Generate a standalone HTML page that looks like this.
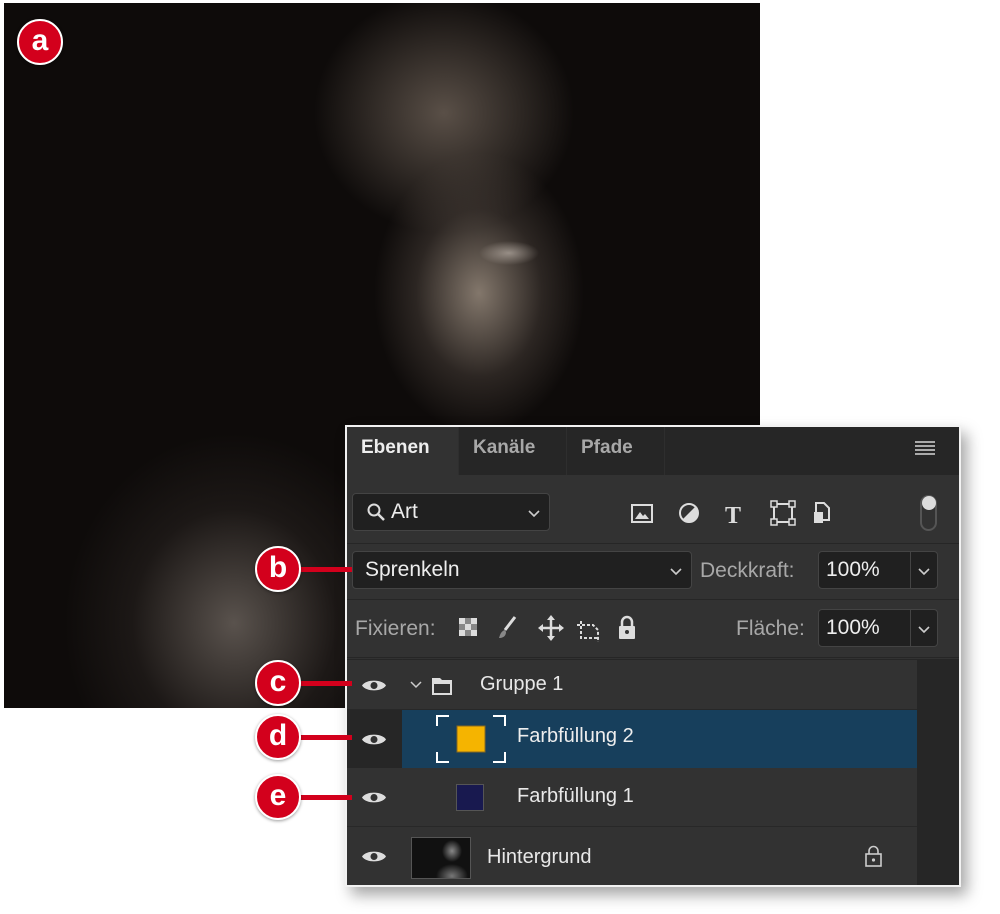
<!DOCTYPE html>
<html><head><meta charset="utf-8"><style>
*{margin:0;padding:0;box-sizing:border-box}
body{width:1000px;height:914px;background:#fff;position:relative;overflow:hidden;font-family:"Liberation Sans",sans-serif}
.photo{position:absolute;left:4px;top:3px;width:756px;height:705px;background:
radial-gradient(ellipse 45px 25px at 470px 470px,rgba(120,105,95,.45),transparent),
radial-gradient(ellipse 30px 12px at 505px 250px,rgba(230,220,210,.5),transparent),
radial-gradient(ellipse 105px 140px at 475px 290px,rgba(170,155,140,.75),rgba(100,88,80,.35) 60%,transparent),
radial-gradient(ellipse 130px 120px at 440px 110px,rgba(140,125,112,.6),transparent),
radial-gradient(ellipse 170px 190px at 230px 620px,rgba(140,130,122,.6),rgba(70,62,58,.25) 60%,transparent),
#0e0b0a}
.panel{position:absolute;left:345px;top:425px;width:616px;height:462px;background:#323232;border:2px solid #f2f2f2;box-shadow:6px 8px 14px rgba(0,0,0,.35);overflow:hidden}
.tabs{position:absolute;left:0;top:0;width:100%;height:48px;background:#262626}
.tab{position:absolute;top:0;height:48px;line-height:42px;font-weight:bold;font-size:19px;color:#a8a8a8;padding-left:14px;border-right:1px solid #2e2e2e}
.tab.on{background:#323232;color:#eee}
.box{position:absolute;background:#202020;border:1px solid #444;border-radius:4px;color:#eee;font-size:21px}
.lbl{position:absolute;color:#a8a8a8;font-size:21px}
.sep{position:absolute;left:0;width:100%;height:1px;background:#262626}
.row{position:absolute;left:0;width:570px;background:#323232;border-bottom:1px solid #282828}
.row .t{position:absolute;color:#e8e8e8;font-size:20px}
.eye{position:absolute;left:14px;width:26px;height:15px}
.badge{position:absolute;width:46px;height:46px;border-radius:50%;background:#d3001c;border:2px solid #fff;color:#fff;font-weight:bold;font-size:30px;text-align:center;line-height:40px;box-shadow:0 1px 3px rgba(0,0,0,.4)}
.line{position:absolute;height:5px;background:#d3001c}
</style></head><body>
<div class="photo"></div>
<div class="badge" style="left:17px;top:19px">a</div>

<div class="panel">
 <div class="tabs">
  <div class="tab on" style="left:0;width:112px">Ebenen</div>
  <div class="tab" style="left:112px;width:108px">Kanäle</div>
  <div class="tab" style="left:220px;width:98px">Pfade</div>
  <div style="position:absolute;right:24px;top:14px;width:20px;height:14px;background:repeating-linear-gradient(#aaa 0 2px,transparent 2px 4px)"></div>
 </div>
 <div class="box" style="left:5px;top:66px;width:198px;height:38px;line-height:36px;padding-left:38px">Art</div>
 <svg style="position:absolute;left:20px;top:76px" width="20" height="20"><circle cx="7" cy="7" r="5.5" stroke="#ddd" stroke-width="2" fill="none"/><line x1="11" y1="11" x2="17" y2="17" stroke="#ddd" stroke-width="2.5"/></svg>
 <svg style="position:absolute;left:180px;top:82px" width="14" height="10"><path d="M2 2l5 5 5-5" stroke="#ccc" stroke-width="1.6" fill="none"/></svg>
 <svg style="position:absolute;left:282px;top:72px" width="230" height="30">
  <rect x="3" y="6" width="20" height="17" fill="none" stroke="#ddd" stroke-width="2"/><path d="M6 20l5-7 3 4 2-2 4 5z" fill="#ddd"/>
  <circle cx="60" cy="14" r="9" fill="none" stroke="#ddd" stroke-width="2"/><path d="M60 5a9 9 0 0 1 0 18z" fill="#ddd" transform="rotate(45 60 14)"/>
  <text x="96" y="24" font-family="Liberation Serif" font-weight="bold" font-size="24" fill="#ddd">T</text>
  <rect x="145" y="5" width="18" height="18" fill="none" stroke="#ddd" stroke-width="2"/><rect x="142" y="2" width="6" height="6" fill="#333" stroke="#ddd" stroke-width="1.5"/><rect x="160" y="2" width="6" height="6" fill="#333" stroke="#ddd" stroke-width="1.5"/><rect x="142" y="20" width="6" height="6" fill="#333" stroke="#ddd" stroke-width="1.5"/><rect x="160" y="20" width="6" height="6" fill="#333" stroke="#ddd" stroke-width="1.5"/>
  <path d="M187 4h8l5 5v12h-13z" fill="none" stroke="#ddd" stroke-width="2"/><rect x="185" y="13" width="9" height="11" fill="#ddd"/>
 </svg>
 <div style="position:absolute;left:573px;top:68px;width:17px;height:36px;border:2px solid #555;border-radius:9px"></div>
 <div style="position:absolute;left:575px;top:69px;width:14px;height:14px;border-radius:50%;background:#ddd"></div>
 <div class="sep" style="top:116px"></div>
 <div class="box" style="left:5px;top:124px;width:340px;height:38px;line-height:36px;padding-left:12px">Sprenkeln</div>
 <svg style="position:absolute;left:322px;top:140px" width="14" height="10"><path d="M2 2l5 5 5-5" stroke="#ccc" stroke-width="1.6" fill="none"/></svg>
 <div class="lbl" style="left:353px;top:132px">Deckkraft:</div>
 <div class="box" style="left:471px;top:124px;width:120px;height:38px;line-height:36px;padding-left:7px">100%</div>
 <div style="position:absolute;left:563px;top:125px;width:1px;height:36px;background:#444"></div>
 <svg style="position:absolute;left:570px;top:140px" width="14" height="10"><path d="M2 2l5 5 5-5" stroke="#ccc" stroke-width="1.6" fill="none"/></svg>
 <div class="sep" style="top:172px"></div>
 <div class="lbl" style="left:8px;top:190px">Fixieren:</div>
 <svg style="position:absolute;left:112px;top:188px" width="200" height="28">
  <rect x="0" y="3" width="18" height="18" fill="#888"/><rect x="0" y="3" width="6" height="6" fill="#ddd"/><rect x="12" y="3" width="6" height="6" fill="#ddd"/><rect x="6" y="9" width="6" height="6" fill="#ddd"/><rect x="0" y="15" width="6" height="6" fill="#ddd"/><rect x="12" y="15" width="6" height="6" fill="#ddd"/>
  <path d="M56 2l-10 13" stroke="#ddd" stroke-width="3"/><path d="M46 15c-4 1-5 5-6 8 4 0 7-2 7-6z" fill="#888"/>
  <path d="M92 2v22M81 13h22" stroke="#ddd" stroke-width="2.5"/><path d="M92 0l-4 5h8zM92 26l-4-5h8zM79 13l5-4v8zM105 13l-5-4v8z" fill="#ddd"/>
  <path d="M122 6v17h17M118 10h16l5 5v12" stroke="#ddd" stroke-width="2" fill="none" stroke-dasharray="3 2"/>
  <rect x="160" y="11" width="16" height="13" rx="1" fill="#ddd"/><path d="M163 11v-4a5 5 0 0 1 10 0v4" stroke="#ddd" stroke-width="2.5" fill="none"/><circle cx="168" cy="17" r="2" fill="#333"/>
 </svg>
 <div class="lbl" style="left:389px;top:190px">Fläche:</div>
 <div class="box" style="left:471px;top:182px;width:120px;height:38px;line-height:36px;padding-left:7px">100%</div>
 <div style="position:absolute;left:563px;top:183px;width:1px;height:36px;background:#444"></div>
 <svg style="position:absolute;left:570px;top:198px" width="14" height="10"><path d="M2 2l5 5 5-5" stroke="#ccc" stroke-width="1.6" fill="none"/></svg>
 <div class="sep" style="top:230px"></div>
 <div style="position:absolute;left:0;top:232px;width:612px;height:230px;background:#262626"></div>
 <div style="position:absolute;left:55px;top:232px;width:1px;height:230px;background:#282828"></div>

 <div class="row" style="top:233px;height:50px">
  <svg class="eye" style="top:18px" viewBox="0 0 26 15"><path d="M1 7.5C5 1 21 1 25 7.5 21 14 5 14 1 7.5z" fill="#ddd"/><circle cx="13" cy="7.5" r="3.5" fill="#323232"/></svg>
  <svg style="position:absolute;left:62px;top:15px" width="50" height="22"><path d="M2 7l5 5 5-5" stroke="#ccc" stroke-width="1.5" fill="none"/><path d="M23 3h8l2 2h10v15H23z" fill="#ddd"/><rect x="25" y="9" width="16" height="9" fill="#323232"/></svg>
  <div class="t" style="left:133px;top:13px">Gruppe 1</div>
 </div>
 <div class="row" style="top:283px;height:58px;left:55px;width:515px;background:#173f5c;border:none"></div>
 <svg class="eye" style="top:305px" viewBox="0 0 26 15"><path d="M1 7.5C5 1 21 1 25 7.5 21 14 5 14 1 7.5z" fill="#ddd"/><circle cx="13" cy="7.5" r="3.5" fill="#323232"/></svg>
 <svg style="position:absolute;left:88px;top:287px" width="72" height="50"><path d="M2 12V2h12M58 2h12v10M2 38v10h12M58 48h12V38" stroke="#fff" stroke-width="2" fill="none"/><rect x="22" y="12" width="28" height="26" fill="#f5b400" stroke="#8a6a20"/></svg>
 <div style="position:absolute;left:170px;top:298px;color:#eee;font-size:20px">Farbfüllung 2</div>
 <div class="row" style="top:341px;height:59px;left:0">
  <svg class="eye" style="top:22px" viewBox="0 0 26 15"><path d="M1 7.5C5 1 21 1 25 7.5 21 14 5 14 1 7.5z" fill="#ddd"/><circle cx="13" cy="7.5" r="3.5" fill="#323232"/></svg>
  <div style="position:absolute;left:109px;top:16px;width:28px;height:27px;background:#18194f;border:1px solid #555"></div>
  <div class="t" style="left:170px;top:17px">Farbfüllung 1</div>
 </div>
 <div class="row" style="top:400px;height:60px;left:0;border:none">
  <svg class="eye" style="top:22px" viewBox="0 0 26 15"><path d="M1 7.5C5 1 21 1 25 7.5 21 14 5 14 1 7.5z" fill="#ddd"/><circle cx="13" cy="7.5" r="3.5" fill="#323232"/></svg>
  <div style="position:absolute;left:64px;top:10px;width:60px;height:42px;border:1px solid #555;background:radial-gradient(ellipse 10px 11px at 40px 13px,#888,transparent),radial-gradient(ellipse 16px 12px at 40px 38px,#777,transparent),#111"></div>
  <div class="t" style="left:140px;top:19px">Hintergrund</div>
  <svg style="position:absolute;left:517px;top:18px" width="20" height="24"><rect x="2" y="9" width="15" height="12" fill="none" stroke="#ccc" stroke-width="1.6"/><path d="M5 9V6a4.5 4.5 0 0 1 9 0v3" stroke="#ccc" stroke-width="1.6" fill="none"/><circle cx="9.5" cy="15" r="1.6" fill="#ccc"/></svg>
 </div>
</div>

<div class="line" style="left:300px;top:567px;width:52px"></div>
<div class="badge" style="left:255px;top:546px">b</div>
<div class="line" style="left:300px;top:681px;width:52px"></div>
<div class="badge" style="left:255px;top:660px">c</div>
<div class="line" style="left:300px;top:735px;width:52px"></div>
<div class="badge" style="left:255px;top:714px">d</div>
<div class="line" style="left:300px;top:795px;width:52px"></div>
<div class="badge" style="left:255px;top:774px">e</div>
</body></html>
